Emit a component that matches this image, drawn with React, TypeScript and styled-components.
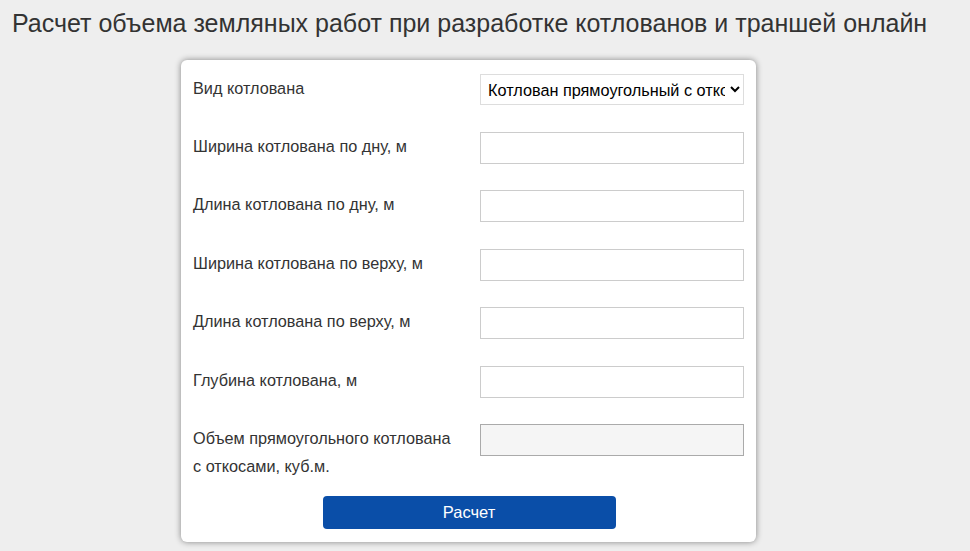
import React from "react";
import styled, { createGlobalStyle } from "styled-components";

const GlobalStyle = createGlobalStyle`
  html, body {
    margin: 0;
    padding: 0;
    background: #eeeeee;
  }
  body {
    font-family: "Liberation Sans", Arial, sans-serif;
    color: #333333;
  }
`;

const Page = styled.div`
  width: 970px;
  min-height: 551px;
  padding: 8px 0 0 12px;
  box-sizing: border-box;
`;

const Title = styled.h1`
  margin: 0;
  font-size: 25px;
  font-weight: normal;
  line-height: 30px;
  color: #333333;
  white-space: nowrap;
`;

const Card = styled.form`
  margin: 22px 0 0 169px;
  width: 575px;
  box-sizing: border-box;
  background: #ffffff;
  border-radius: 6px;
  box-shadow: 0 0 6px rgba(0, 0, 0, 0.45);
  padding: 14px 12px 13px 12px;
`;

const Rows = styled.div`
  display: grid;
  grid-template-columns: 287px 264px;
  row-gap: 26.5px;
`;

const Label = styled.label`
  font-size: 16.25px;
  line-height: 28px;
  color: #333333;
`;

const Select = styled.select`
  width: 264px;
  height: 31px;
  box-sizing: border-box;
  border: 1px solid #dddddd;
  background: #ffffff;
  font-family: "Liberation Sans", Arial, sans-serif;
  font-size: 16.25px;
  color: #000000;
  padding: 0 2px 0 3px;
  border-radius: 0;
`;

const Field = styled.input<{ $readonly?: boolean }>`
  width: 264px;
  height: 32px;
  box-sizing: border-box;
  border: 1px solid ${(p) => (p.$readonly ? "#aaaaaa" : "#cccccc")};
  background: ${(p) => (p.$readonly ? "#f5f5f5" : "#ffffff")};
  font-family: "Liberation Sans", Arial, sans-serif;
  font-size: 16px;
  padding: 0 6px;
  outline: none;
`;

const Footer = styled.div`
  display: flex;
  justify-content: center;
  margin-top: 16px;
`;

const Button = styled.button`
  width: 293px;
  height: 33px;
  border: none;
  border-radius: 4px;
  background: #0a4ea8;
  color: #ffffff;
  font-family: "Liberation Sans", Arial, sans-serif;
  font-size: 16.5px;
  cursor: pointer;
  margin-left: 1px;
`;

const fields = [
  "Ширина котлована по дну, м",
  "Длина котлована по дну, м",
  "Ширина котлована по верху, м",
  "Длина котлована по верху, м",
  "Глубина котлована, м",
];

export default function App() {
  return (
    <>
      <GlobalStyle />
      <Page>
        <Title>
          Расчет объема земляных работ при разработке котлованов и траншей онлайн
        </Title>
        <Card onSubmit={(e) => e.preventDefault()}>
          <Rows>
            <Label>Вид котлована</Label>
            <Select defaultValue="slopes">
              <option value="slopes">Котлован прямоугольный с откосами</option>
              <option value="straight">Котлован прямоугольный</option>
              <option value="trench">Траншея</option>
            </Select>
            {fields.map((f) => (
              <React.Fragment key={f}>
                <Label>{f}</Label>
                <Field type="text" />
              </React.Fragment>
            ))}
            <Label>
              Объем прямоугольного котлована
              <br />
              с откосами, куб.м.
            </Label>
            <Field type="text" readOnly $readonly />
          </Rows>
          <Footer>
            <Button type="submit">Расчет</Button>
          </Footer>
        </Card>
      </Page>
    </>
  );
}
